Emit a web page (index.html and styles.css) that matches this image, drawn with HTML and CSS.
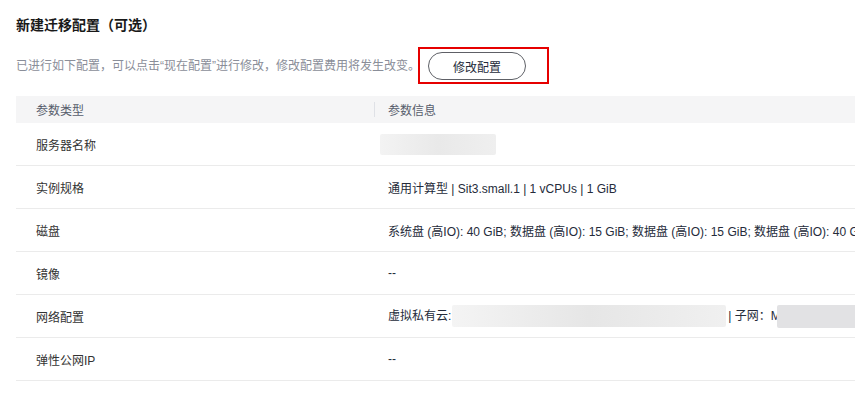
FILE: index.html
```html
<!DOCTYPE html>
<html lang="zh-CN">
<head>
    <meta charset="UTF-8">
    <meta name="viewport" content="width=device-width, initial-scale=1.0">
    <title>新建迁移配置</title>
    <link rel="stylesheet" href="styles.css">
</head>
<body>
    <div class="page">
        <h2 class="title">新建迁移配置（可选）</h2>
        <div class="toolbar">
            <span class="desc">已进行如下配置，可以点击“现在配置”进行修改，修改配置费用将发生改变。</span>
            <span class="mark">
                <button class="btn">修改配置</button>
            </span>
        </div>
        <table class="params">
            <thead>
                <tr>
                    <th class="col-type">参数类型</th>
                    <th class="col-info"><span class="sep"></span>参数信息</th>
                </tr>
            </thead>
            <tbody>
                <tr>
                    <td>服务器名称</td>
                    <td><span class="blur blur-name"></span></td>
                </tr>
                <tr>
                    <td>实例规格</td>
                    <td>通用计算型 | Sit3.small.1 | 1 vCPUs | 1 GiB</td>
                </tr>
                <tr>
                    <td>磁盘</td>
                    <td>系统盘 (高IO): 40 GiB; 数据盘 (高IO): 15 GiB; 数据盘 (高IO): 15 GiB; 数据盘 (高IO): 40 GiB</td>
                </tr>
                <tr>
                    <td>镜像</td>
                    <td>--</td>
                </tr>
                <tr>
                    <td>网络配置</td>
                    <td class="net">虚拟私有云:<span class="blur blur-vpc"></span>| 子网：M<span class="blur blur-subnet"></span></td>
                </tr>
                <tr>
                    <td>弹性公网IP</td>
                    <td>--</td>
                </tr>
            </tbody>
        </table>
    </div>
</body>
</html>
```

FILE: styles.css
```css
body {
    margin: 0;
    background: #fff;
    font-family: "Liberation Sans", "Noto Sans CJK SC", sans-serif;
    font-size: 12px;
    color: #252b3a;
    overflow: hidden;
}
.page {
    padding: 15px 0 0 16px;
    width: 1000px;
}
.title {
    margin: 0;
    font-size: 14px;
    line-height: 20px;
    font-weight: bold;
    color: #191919;
}
.toolbar {
    display: flex;
    align-items: center;
    margin-top: 12px;
    height: 37px;
}
.desc {
    color: #8a8e99;
    line-height: 18px;
}
.mark {
    display: flex;
    margin-left: -2px;
    border: 2px solid #e60000;
    padding: 3px 21px 2px 8px;
}
.btn {
    width: 98px;
    height: 28px;
    border: 1px solid #5e6066;
    border-radius: 14px;
    background: #fff;
    font-family: inherit;
    font-size: 12px;
    color: #252b3a;
    cursor: pointer;
}
.params {
    margin-top: 12px;
    width: 900px;
    table-layout: fixed;
    border-collapse: collapse;
    white-space: nowrap;
}
.params th {
    height: 27px;
    padding: 0;
    background: #f5f5f6;
    text-align: left;
    font-weight: normal;
    color: #575d6c;
}
.params .col-type {
    width: 338px;
    padding-left: 20px;
}
.params .col-info {
    position: relative;
    padding-left: 14px;
}
.sep {
    position: absolute;
    left: 0;
    top: 6px;
    width: 1px;
    height: 15px;
    background: #dfe1e6;
}
.params td {
    height: 42px;
    padding: 0;
    border-bottom: 1px solid #ebebeb;
    color: #252b3a;
    overflow: hidden;
}
.params td:first-child {
    padding-left: 20px;
    color: #333;
}
.params td + td {
    padding-left: 14px;
}
.blur {
    display: inline-block;
    vertical-align: middle;
    border-radius: 2px;
}
.blur-name {
    width: 116px;
    height: 21px;
    margin-left: -8px;
    background: linear-gradient(90deg, #f3f3f3, #e9e9e9 50%, #efefef);
}
.blur-vpc {
    width: 274px;
    height: 22px;
    margin: 0 2px 0 1px;
    background: linear-gradient(90deg, #f4f4f4, #e6e6e6 50%, #f0f0f0);
}
.blur-subnet {
    width: 90px;
    height: 23px;
    margin-left: -4px;
    background: #e2e2e4;
}
```
